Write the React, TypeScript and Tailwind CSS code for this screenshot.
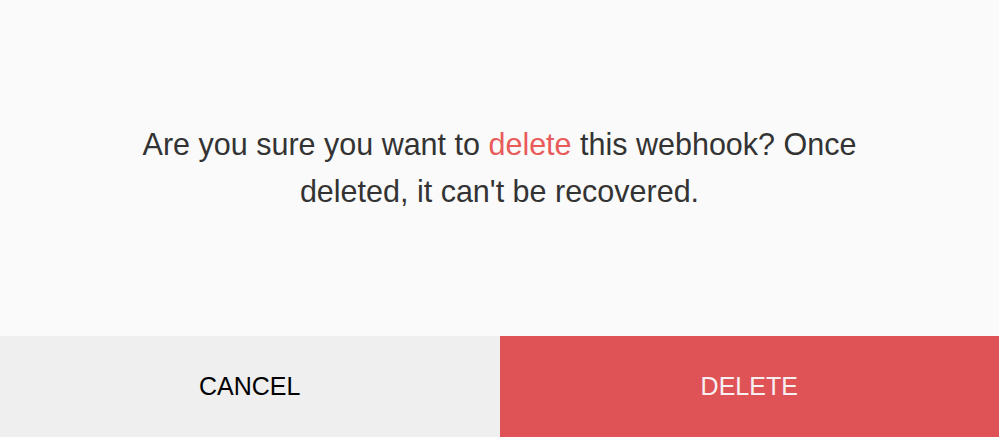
export default function App() {
  return (
    <div
      className="flex h-[437px] w-[999px] flex-col bg-[#fafafa]"
      style={{ fontFamily: '"Liberation Sans", Arial, sans-serif' }}
    >
      <div className="flex flex-1 items-center justify-center">
        <p className="w-[730px] text-center text-[30.5px] leading-[47px] text-[#333333]">
          Are you sure you want to <span className="text-[#e95b5b]">delete</span> this webhook? Once
          deleted, it can't be recovered.
        </p>
      </div>
      <div className="flex h-[101px]">
        <button className="flex-1 bg-[#efefef] text-[25px] text-black">CANCEL</button>
        <button className="flex-1 bg-[#df5357] text-[25px] text-[#f7f0f2]">DELETE</button>
      </div>
    </div>
  )
}
